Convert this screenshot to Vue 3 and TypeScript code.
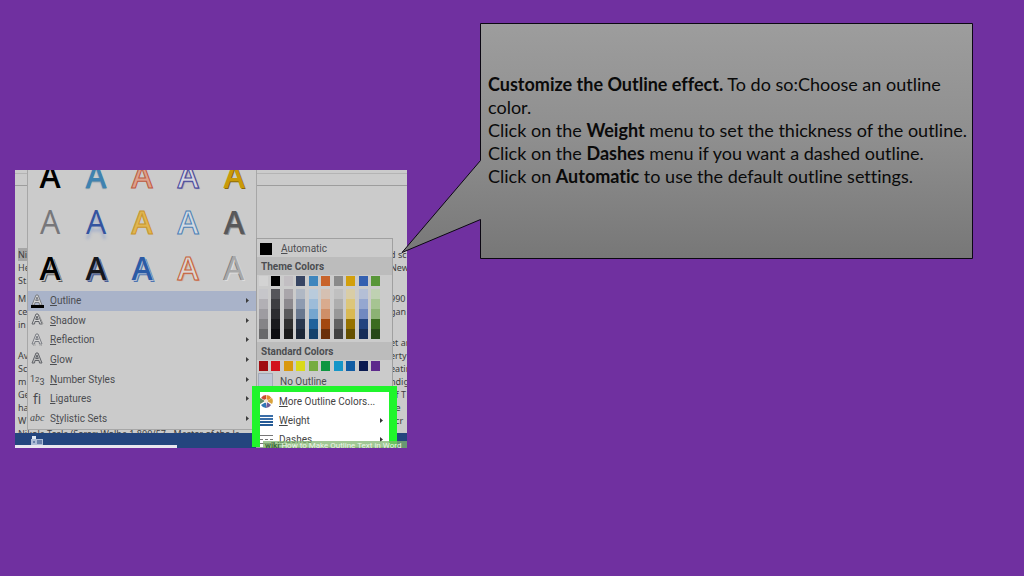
<script setup lang="ts">
interface Letter { id: string; kind: string }
interface Item { key: string; rest: string; before?: string; icon: string }

const letters: Letter[] = [
  'black', 'sky', 'coral', 'indigo', 'gold',
  'grey', 'mirror', 'amber', 'hollow', 'steel',
  'shadow', 'night', 'royal', 'orange', 'silver',
].map((kind, i) => ({ id: `effect-${i}`, kind }))

const items: Item[] = [
  { key: 'O', rest: 'utline', icon: 'outline' },
  { key: 'S', rest: 'hadow', icon: 'shadow' },
  { key: 'R', rest: 'eflection', icon: 'reflection' },
  { key: 'G', rest: 'low', icon: 'glow' },
  { key: 'N', rest: 'umber Styles', icon: '123' },
  { key: 'L', rest: 'igatures', icon: 'fi' },
  { before: 'S', key: 't', rest: 'ylistic Sets', icon: 'abc' },
]

const themeColors: string[] = ['#d3d3d3', '#000000', '#c2bec2', '#364462', '#3f86bd', '#c8632a', '#8a8a8a', '#d29f0c', '#3460b0', '#589638']
const shades: string[][] = [
  ['#c6c6ca', '#55555a', '#aaa6ab', '#b0b8c4', '#b9cbdc', '#d5c0b2', '#c0c0c0', '#d9cda6', '#b4bfd6', '#bfd1b2'],
  ['#b2b0b5', '#3e3e42', '#8c898e', '#8e9bb0', '#9dbcd9', '#d9ab8e', '#aeaeae', '#dcc67a', '#95a7d0', '#a6c492'],
  ['#9e9ca1', '#2c2c30', '#5a5a5c', '#68788f', '#75a6cf', '#cf8f68', '#989898', '#d9b952', '#7189c0', '#8cb274'],
  ['#858487', '#1a1a1e', '#303030', '#29384e', '#20629c', '#a3480f', '#626262', '#967200', '#22437f', '#3b6b20'],
  ['#69696b', '#0c0c10', '#1a1a1a', '#1b2636', '#15426b', '#6b300a', '#424242', '#655000', '#162d58', '#28481a'],
]
const standardColors: string[] = ['#a00c10', '#d2101c', '#d9980e', '#d9d91a', '#76ac40', '#0c9640', '#1596c8', '#105ca4', '#0a1a50', '#5e2a8c']

const lines: [string, string][] = [
  ['Ni', 'd sc'], ['He', 'New'], ['St.', ''], ['', ''],
  ['M', '990'], ['ce', 'gan'], ['in', ''], ['', ''], ['', 'et ar'],
  ['Av', 'erty'], ['Sc', 'eatin'], ['m', 'ndig'], ['Ge', 'of T'],
  ['ha', 'he'], ['W', 'ecr'],
]
</script>

<template>
  <main class="slide">
    <figure class="shot">
      <div class="ribbon"></div>
      <div class="ribbon second"></div>
      <div class="doc">
        <div v-for="(line, i) in lines" :key="i" class="line" :class="{ gap: i === 3 || i === 7 }">
          <span :class="{ selected: i === 0 }">{{ line[0] }}</span><span class="end">{{ line[1] }}</span>
        </div>
        <div class="line">Nikola Tesla (Serer: Wolba 1,800/57 - Master of the la</div>
      </div>
      <div class="status">
        <svg width="12" height="9" viewBox="0 0 12 9"><path d="M0 3h12v6H0z" fill="#aebcd6" /><path d="M1 0h4v3H1z" fill="#dfe6f1" /><path d="M6 5h5M6 7h5M2 6h2" stroke="#24457e" /></svg>
      </div>
      <div class="progress"></div>

      <section class="menu">
        <div class="gallery">
          <button v-for="l in letters" :key="l.id" class="letter" :class="l.kind">A</button>
        </div>
        <div class="items">
          <button v-for="(item, i) in items" :key="item.icon" class="item" :class="{ active: i === 0 }">
            <span class="icon">
              <span v-if="item.icon === '123'" class="num">1<small>2</small><sub>3</sub></span>
              <span v-else-if="item.icon === 'fi'" class="fi">fi</span>
              <span v-else-if="item.icon === 'abc'" class="abc">abc</span>
              <svg v-else width="15" height="14" viewBox="0 0 15 14" fill="none">
                <path d="M2 11 6 1h2l4 10h-2.500L9 8.500H5L4.500 11zM5.700 6.500h2.600L7 3z" :stroke="item.icon === 'shadow' || item.icon === 'glow' ? '#606368' : '#7b7e84'" :fill="item.icon === 'glow' ? '#bcbcbc' : '#d4d4d4'" />
                <path v-if="item.icon === 'outline'" d="M1 11h13v3H1z" fill="#000" />
                <path v-if="item.icon === 'shadow'" d="m9 2 4 9h-2" stroke="#999" />
                <path v-if="item.icon === 'reflection'" d="m3 13 1-1h2m3 0h2l1 1" stroke="#aaa" />
              </svg>
            </span>
            <span>{{ item.before }}<u>{{ item.key }}</u>{{ item.rest }}</span>
            <svg class="arrow" width="3" height="5" viewBox="0 0 3 5"><path d="M0 0 3 2.500 0 5z" fill="#3c3c3c" /></svg>
          </button>
        </div>
      </section>

      <section class="submenu">
        <button class="row auto"><i class="box black-box"></i><span><u>A</u>utomatic</span></button>
        <h3>Theme Colors</h3>
        <div class="swatches">
          <button v-for="c in themeColors" :key="c" :style="{ background: c }" :aria-label="c"></button>
        </div>
        <div class="shades">
          <template v-for="(r, i) in shades" :key="i">
            <button v-for="c in r" :key="c" :style="{ background: c }" :aria-label="c"></button>
          </template>
        </div>
        <h3>Standard Colors</h3>
        <div class="swatches">
          <button v-for="c in standardColors" :key="c" :style="{ background: c }" :aria-label="c"></button>
        </div>
        <button class="row none"><i class="box"></i><span><u>N</u>o Outline</span></button>
        <div class="highlight">
          <button class="row">
            <svg width="13" height="13" viewBox="0 0 13 13">
              <path d="M6.500 6V0a6 6 0 0 1 5 3z" fill="#e58a2d" /><path d="M7 6l5-3a6 6 0 0 1 0 6z" fill="#d9a33a" />
              <path d="M7 7l4 3a6 6 0 0 1-5 3z" fill="#6f5a96" /><path d="M6 7v6a6 6 0 0 1-5-3z" fill="#2e75b6" />
              <path d="M5 6 0 9a6 6 0 0 1 0-6z" fill="#5d8b62" /><path d="M6 6 1 3a6 6 0 0 1 5-3z" fill="#cb4b31" />
              <circle cx="6" cy="6" r="2" fill="#f3e7dc" />
            </svg>
            <span><u>M</u>ore Outline Colors...</span>
          </button>
          <button class="row">
            <svg width="13" height="12" viewBox="0 0 13 12"><path d="M0 1h13M0 4h13" stroke="#3a6ea8" stroke-width="2" /><path d="M0 7h13M0 10h13" stroke="#255a96" stroke-width="2" /></svg>
            <span><u>W</u>eight</span>
            <svg class="arrow" width="3" height="5" viewBox="0 0 3 5"><path d="M0 0 3 2.500 0 5z" fill="#333" /></svg>
          </button>
          <button class="row">
            <svg width="13" height="9" viewBox="0 0 13 9"><path d="M0 .5h13M0 4.500h3m2 0h3m2 0h3M0 8.500h13" stroke="#777" /></svg>
            <span><u>D</u>ashes</span>
            <svg class="arrow" width="3" height="5" viewBox="0 0 3 5"><path d="M0 0 3 2.500 0 5z" fill="#333" /></svg>
          </button>
        </div>
      </section>
      <figcaption class="mark"><b>wiki</b><span>How to Make Outline Text in Word</span></figcaption>
    </figure>

    <article class="callout">
      <svg class="bubble" viewBox="0 0 572 236" preserveAspectRatio="none">
        <defs>
          <linearGradient id="fill" x1="0" y1="0" x2="0" y2="1">
            <stop offset="0" stop-color="#9d9d9d" /><stop offset="0.5" stop-color="#8e8e8e" /><stop offset="1" stop-color="#777777" />
          </linearGradient>
        </defs>
        <path d="M79.500 .5H571.500V235.500H79.500V196.500L1 229.500 79.500 137.500z" fill="url(#fill)" stroke="#0b0712" vector-effect="non-scaling-stroke" />
      </svg>
      <p><b>Customize the Outline effect.</b> To do so:Choose an outline color.</p>
      <p>Click on the <b>Weight</b> menu to set the thickness of the outline.</p>
      <p>Click on the <b>Dashes</b> menu if you want a dashed outline.</p>
      <p>Click on <b>Automatic</b> to use the default outline settings.</p>
    </article>
  </main>
</template>

<style>
body { margin: 0; background: #7030a0; }
</style>

<style scoped>
* { box-sizing: border-box; }
button { appearance: none; border: 0; padding: 0; margin: 0; background: none; font: inherit; color: inherit; text-align: left; }
u { text-underline-offset: 1px; }
.slide {
  min-height: 100vh;
  display: grid;
  grid-template-columns: minmax(0, 392fr) minmax(0, 493fr);
  column-gap: 73px;
  align-items: start;
  padding: 23px 51px 0 15px;
  background: #7030a0;
}
.shot {
  position: relative;
  height: 278px;
  margin: 147px 0 0;
  overflow: hidden;
  background: #cbcbcb;
  color: #4b4d51;
  font: 10px/13px Roboto, "Open Sans", sans-serif;
}
.ribbon { height: 4px; border-bottom: 1px solid #b4b4b4; }
.ribbon.second { height: 12px; border-color: #9d9d9d; }
.doc { padding: 62px 0 0 3px; color: #3d3d3d; font-family: "Noto Sans", sans-serif; font-size: 9px; }
.line { display: flex; justify-content: space-between; height: 13px; white-space: nowrap; }
.line.gap { height: 5px; }
.end { width: 17px; overflow: hidden; }
.selected { background: #a5a5a5; }
.status { position: absolute; inset: auto 0 0; height: 15px; padding: 3px 16px; background: #24457e; line-height: 0; }
.progress { position: absolute; left: 0; bottom: 0; width: 162px; height: 3px; background: #e9e6f0; }

.menu { position: absolute; left: 12px; top: 0; width: 230px; height: 260px; background: #cbcbcb; border: solid #a7a7a7; border-width: 0 1px 1px; }
.gallery { display: grid; grid-template-columns: repeat(5, 46px); grid-auto-rows: 46px; height: 121px; align-content: end; margin-left: -1px; }
.letter { text-align: center; font: 600 32px/46px "Open Sans", sans-serif; }
.black { color: #000; }
.sky { color: #3f82b0; text-shadow: 0 1px 1px #7796a8; }
.coral { color: #dda18c; -webkit-text-stroke: 1px #bd5a40; }
.indigo { color: #d6d6e0; -webkit-text-stroke: 1px #47479a; text-shadow: 1px 1px 1px #7272a8; }
.gold { color: #c99a08; text-shadow: 1px 1px 0 #8a6908; }
.letter.grey, .letter.mirror, .letter.silver { font-weight: 400; }
.grey { color: #77777a; }
.mirror { color: #3454a0; text-shadow: 0 5px 3px #a7b2cb; }
.amber { color: #e0b650; -webkit-text-stroke: 1px #c9952c; }
.hollow { color: #d3dae2; -webkit-text-stroke: 1px #4a7fb6; }
.steel { color: #58585a; text-shadow: 1px 1px 0 #8d8d8d; }
.shadow { color: #000; text-shadow: 1px 1px 0 #cbcbcb, 2px 2px 0 #5f5f5f; }
.night { color: #15171d; text-shadow: 1px 1px 0 #8290b0, 2px 2px 0 #4b5d94; }
.royal { color: #2c5ba5; text-shadow: 1px 1px 0 #b1bfd6, 2px 2px 0 #4f74b0; }
.orange { color: #dcd6d2; -webkit-text-stroke: 1px #c6603a; text-shadow: 1px 1px 1px #cf9078; }
.silver { color: #a8a8a8; text-shadow: 1px 1px 0 #dedede, -1px 0 0 #808080; }

.items { display: grid; grid-template-rows: repeat(7, 1fr); height: 137px; }
.item { display: flex; align-items: center; padding: 0 7px 0 2px; }
.item.active { background: #a9b3c9; }
.icon { width: 20px; display: flex; color: #46484c; }
.icon svg { display: block; }
.num { font-size: 9px; line-height: 12px; }
.num small { font-size: 8px; }
.num sub { font-size: 9px; line-height: 0; }
.fi { padding-left: 3px; font: 14px/16px "Open Sans", sans-serif; }
.abc { font: italic 10px/14px "Liberation Serif", serif; }
.arrow { margin-left: auto; }

.submenu { position: absolute; left: 241px; top: 68px; width: 137px; background: #cbcbcb; border: 1px solid #a0a0a0; }
.row { display: flex; align-items: center; width: 100%; height: 18px; white-space: nowrap; }
.box { width: 12px; height: 12px; margin: 0 9px 0 3px; background: #bdc5d4; border: 1px solid #a4aab8; }
.auto { padding-top: 1px; }
.black-box { background: #000; border-color: #000; }
h3 { height: 18px; margin: 0; padding-left: 4px; font-size: 10px; line-height: 19px; background: #bcbcbc; }
.swatches, .shades { display: grid; grid-template-columns: repeat(10, 9px); justify-content: space-between; padding: 1px 12px 3px 2px; grid-auto-rows: 10px; }
.shades { padding-top: 0; }
.none { height: 12px; }
.none .box { width: 15px; height: 14px; margin: 0 7px 0 1px; }
.none span { padding-top: 2px; }
.highlight { position: relative; margin: 0 -5px; border: solid #20f52c; border-width: 6px 8px 0; background: #fff; height: 61px; overflow: hidden; }
.highlight .row { height: 19px; padding-right: 6px; }
.highlight .row > svg:first-child { margin-right: 6px; }
.highlight .row > span { color: #444; }
.mark { position: absolute; right: 0; bottom: 0; width: 144px; height: 7px; overflow: hidden; display: flex; background: rgb(128 180 112 / 75%); color: #edf5e9; font-size: 8px; line-height: 9px; white-space: nowrap; }
.mark b { padding: 0 2px; color: #3c6b38; }

.callout { position: relative; min-height: 236px; padding: 50px 4px 71px 8px; color: #0a0a0a; font: 18px/23px Lato, "Open Sans", sans-serif; font-variant-ligatures: none; }
.bubble { position: absolute; left: -79px; top: 0; width: calc(100% + 79px); height: 100%; }
p { position: relative; margin: 0; }
</style>
